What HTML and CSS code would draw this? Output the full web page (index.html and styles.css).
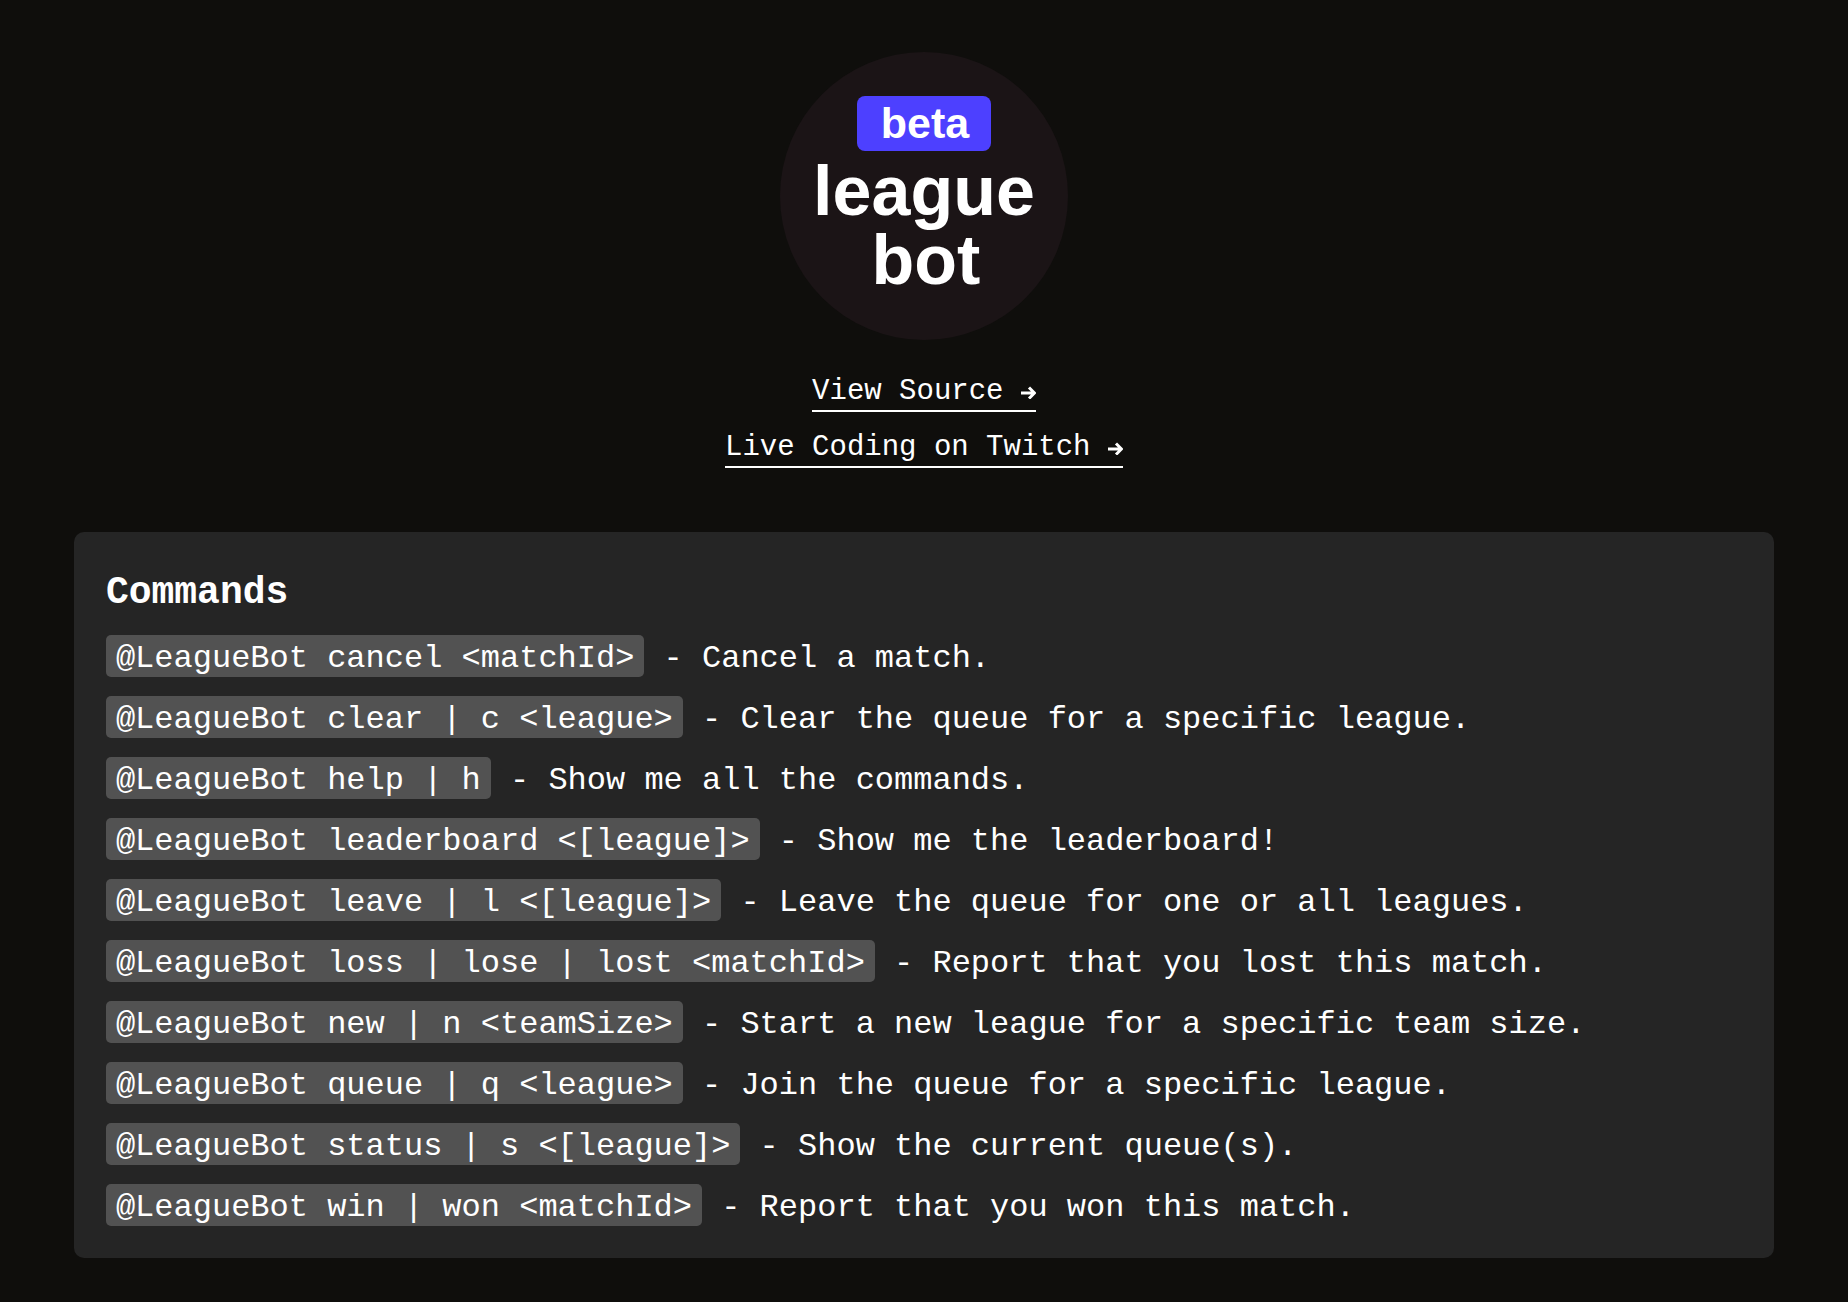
FILE: index.html
```html
<!DOCTYPE html>
<html lang="en">
<head>
  <meta charset="utf-8">
  <meta name="viewport" content="width=device-width, initial-scale=1">
  <title>League Bot</title>
  <link rel="stylesheet" href="styles.css">
</head>
<body>
  <header class="intro">
    <svg class="logo" viewBox="0 0 288 288" role="img" aria-label="beta league bot">
      <circle class="logo-disc" cx="144" cy="144" r="144"/>
      <rect class="logo-badge" x="77" y="44" width="134" height="55" rx="8"/>
      <text class="logo-beta" x="145" y="86">beta</text>
      <text class="logo-name" x="144" y="163">league</text>
      <text class="logo-name" x="146" y="232">bot</text>
    </svg>
    <nav class="links">
      <a class="link" href="#source">View Source <svg class="arrow" viewBox="0 0 15 14" aria-hidden="true"><path d="M0 8h13M8 2.5L13.5 8L8 13.5"/></svg></a>
      <a class="link" href="#twitch">Live Coding on Twitch <svg class="arrow" viewBox="0 0 15 14" aria-hidden="true"><path d="M0 8h13M8 2.5L13.5 8L8 13.5"/></svg></a>
    </nav>
  </header>
  <main class="panel">
    <h1 class="panel-title">Commands</h1>
    <ul class="commands">
      <li><code>@LeagueBot cancel &lt;matchId&gt;</code> - Cancel a match.</li>
      <li><code>@LeagueBot clear | c &lt;league&gt;</code> - Clear the queue for a specific league.</li>
      <li><code>@LeagueBot help | h</code> - Show me all the commands.</li>
      <li><code>@LeagueBot leaderboard &lt;[league]&gt;</code> - Show me the leaderboard!</li>
      <li><code>@LeagueBot leave | l &lt;[league]&gt;</code> - Leave the queue for one or all leagues.</li>
      <li><code>@LeagueBot loss | lose | lost &lt;matchId&gt;</code> - Report that you lost this match.</li>
      <li><code>@LeagueBot new | n &lt;teamSize&gt;</code> - Start a new league for a specific team size.</li>
      <li><code>@LeagueBot queue | q &lt;league&gt;</code> - Join the queue for a specific league.</li>
      <li><code>@LeagueBot status | s &lt;[league]&gt;</code> - Show the current queue(s).</li>
      <li><code>@LeagueBot win | won &lt;matchId&gt;</code> - Report that you won this match.</li>
    </ul>
  </main>
</body>
</html>
```

FILE: styles.css
```css
* {
  box-sizing: border-box;
}

body {
  margin: 0;
  padding: 52px 4% 44px;
  background: #0f0e0c;
  color: #fff;
  font-family: "Liberation Mono", monospace;
}

.intro {
  display: flex;
  flex-direction: column;
  align-items: center;
  gap: 34px;
  margin-bottom: 64px;
}

.logo {
  width: 288px;
  height: 288px;
}

.logo-disc {
  fill: #1b1416;
}

.logo-badge {
  fill: #4d40ff;
}

.logo-beta,
.logo-name {
  fill: #fff;
  font-family: "Liberation Sans", sans-serif;
  font-weight: 700;
  text-anchor: middle;
}

.logo-beta {
  font-size: 43px;
}

.logo-name {
  font-size: 70px;
}

.links {
  display: flex;
  flex-direction: column;
  align-items: center;
  gap: 18px;
}

.link {
  border-bottom: 2px solid #fff;
  color: inherit;
  font-size: 29px;
  line-height: 36px;
  text-decoration: none;
}

.arrow {
  width: 15px;
  height: 14px;
  fill: none;
  stroke: #fff;
  stroke-width: 3;
}

.panel {
  padding: 32px;
  border-radius: 10px;
  background: #252525;
}

.panel-title {
  margin: 0 0 14px;
  font-size: 38px;
  line-height: 57px;
}

.commands {
  display: flex;
  flex-direction: column;
  gap: 19px;
  margin: 0;
  padding: 0;
  list-style: none;
  font-size: 32px;
  line-height: 36px;
}

.commands code {
  display: inline-block;
  padding: 6px 10px 0;
  border-radius: 5px;
  background: #525252;
  font: inherit;
}
```
